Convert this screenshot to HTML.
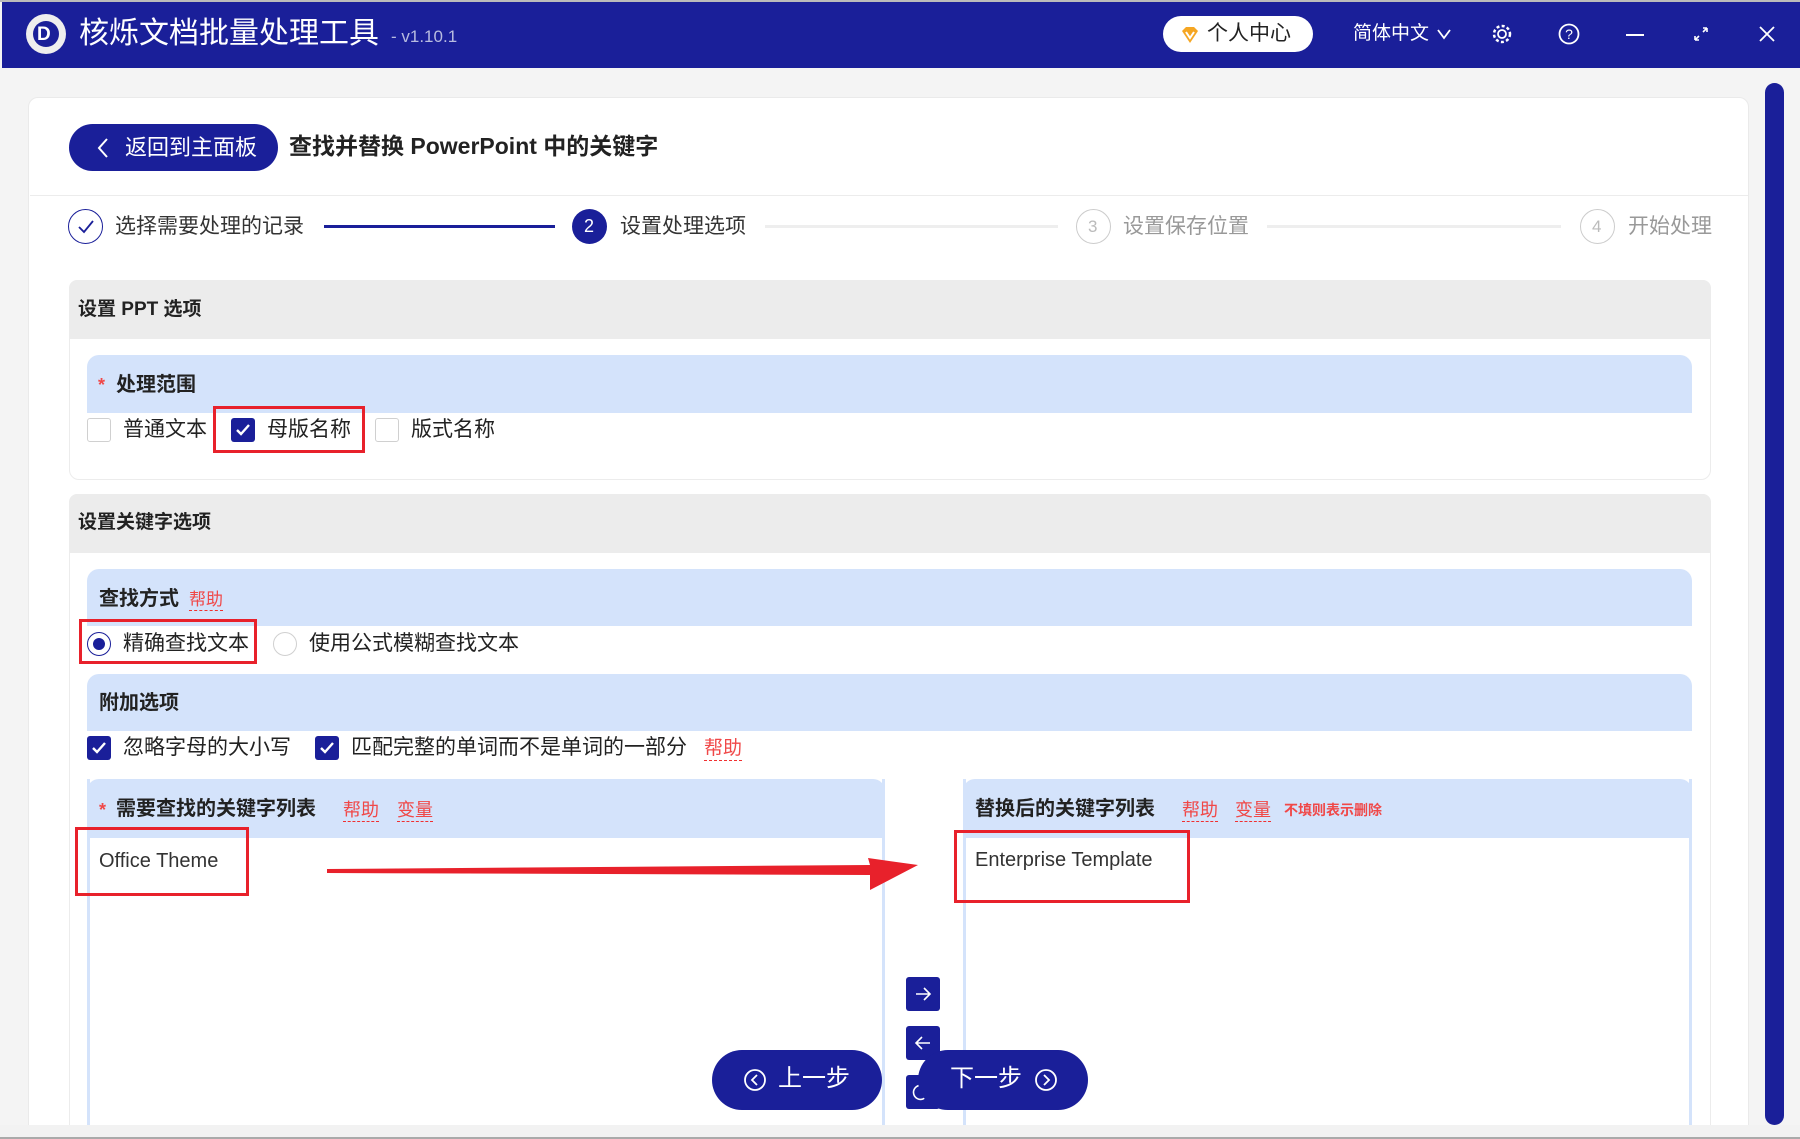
<!DOCTYPE html>
<html><head><meta charset="utf-8">
<style>
*{margin:0;padding:0;box-sizing:border-box}
html{width:1800px;height:1139px;overflow:hidden}
body{width:1800px;height:1139px;overflow:hidden;background:#f4f4f4;font-family:"Liberation Sans","Noto Sans CJK SC",sans-serif;position:relative;color:#222}
.a{position:absolute}
.t{position:absolute;white-space:nowrap;line-height:1}
.blue{background:#1a1f99}
.hdr{position:absolute;background:#d4e3fb;border-radius:12px 12px 0 0}
.gh{position:absolute;background:#ececec;border-radius:8px 8px 0 0}
.b{font-weight:bold}
.red{color:#f04848}
.u{border-bottom:1.5px dashed #f03030;padding-bottom:2px}
.cb{position:absolute;width:24px;height:24px;border:1px solid #d0d0d0;border-radius:3px;background:#fff}
.cbc{position:absolute;width:24px;height:24px;border-radius:3px;background:#1a1f99}
.rb{position:absolute;border:3px solid #e8212b}
.sq{position:absolute;width:34px;height:34px;border-radius:3px;background:#1a1f99}
</style></head><body>
<div class="a" style="left:0;top:0;width:1800px;height:2px;background:#bbb"></div>
<div class="a blue" style="left:2px;top:2px;width:1798px;height:66px"></div>
<div class="a" style="left:26px;top:14px;width:40px;height:40px;border-radius:50%;background:#eee"></div>
<div class="a" style="left:33px;top:21px;width:26px;height:26px;border-radius:50%;background:#1a1f99"></div>
<div class="t b" style="left:37px;top:25px;color:#fff;font-size:19px">D</div>
<div class="t" style="left:79px;top:19px;color:#fff;font-size:30px">核烁文档批量处理工具</div>
<div class="t" style="left:391px;top:28px;color:#b8bce0;font-size:17px">- v1.10.1</div>
<div class="a" style="left:1163px;top:16px;width:150px;height:36px;border-radius:18px;background:#fff"></div>
<svg class="a" style="left:1180px;top:25px" width="20" height="20" viewBox="0 0 20 20"><path d="M2 6 L6 2 L14 2 L18 6 L10 18 Z" fill="#f5a623"/><path d="M6 7 L10 13 L14 7" stroke="#fff" stroke-width="2" fill="none"/></svg>
<div class="t" style="left:1207px;top:23px;font-size:21px;color:#222">个人中心</div>
<div class="t" style="left:1353px;top:24px;font-size:19px;color:#fff">简体中文</div>
<svg class="a" style="left:1436px;top:28px" width="16" height="12"><path d="M2 2 L8 10 L14 2" stroke="#fff" stroke-width="1.8" fill="none"/></svg>
<svg class="a" style="left:1491px;top:23px" width="22" height="22" viewBox="0 0 22 22"><circle cx="11" cy="11" r="4" stroke="#fff" stroke-width="1.8" fill="none"/><circle cx="11" cy="11" r="8" stroke="#fff" stroke-width="2.5" stroke-dasharray="3 2.3" fill="none"/></svg>
<svg class="a" style="left:1558px;top:23px" width="22" height="22"><circle cx="11" cy="11" r="9.5" stroke="#fff" stroke-width="1.8" fill="none"/><text x="11" y="16" text-anchor="middle" fill="#fff" font-size="14" font-family="Liberation Sans">?</text></svg>
<div class="a" style="left:1626px;top:34px;width:18px;height:2px;background:#fff"></div>
<svg class="a" style="left:1692px;top:25px" width="18" height="18"><path d="M3 15 L7 11 M15 3 L11 7 M3 15 L3 11 M3 15 L7 15 M15 3 L11 3 M15 3 L15 7" stroke="#fff" stroke-width="1.6" fill="none"/></svg>
<svg class="a" style="left:1758px;top:25px" width="18" height="18"><path d="M2 2 L16 16 M16 2 L2 16" stroke="#fff" stroke-width="1.8"/></svg>

<div class="a" style="left:28px;top:97px;width:1721px;height:1040px;background:#fff;border:1px solid #eaeaea;border-radius:10px"></div>
<div class="a" style="left:1765px;top:83px;width:19px;height:1042px;border-radius:10px;background:#1a1f99"></div>

<div class="a blue" style="left:69px;top:124px;width:209px;height:47px;border-radius:24px"></div>
<svg class="a" style="left:96px;top:137px" width="14" height="22"><path d="M11 2 L3 11 L11 20" stroke="#fff" stroke-width="2" fill="none"/></svg>
<div class="t" style="left:125px;top:137px;color:#fff;font-size:22px">返回到主面板</div>
<div class="t b" style="left:289px;top:135px;font-size:23px;color:#222">查找并替换 PowerPoint 中的关键字</div>
<div class="a" style="left:30px;top:195px;width:1718px;height:1px;background:#ececec"></div>

<div class="a" style="left:68px;top:209px;width:35px;height:35px;border-radius:50%;border:1.5px solid #1a1f99"></div>
<svg class="a" style="left:76px;top:218px" width="20" height="18"><path d="M3 9 L8 14 L17 3" stroke="#1a1f99" stroke-width="1.8" fill="none"/></svg>
<div class="t" style="left:115px;top:216px;font-size:21px;color:#333">选择需要处理的记录</div>
<div class="a" style="left:324px;top:225px;width:231px;height:3px;background:#1a1f99"></div>
<div class="a blue" style="left:572px;top:209px;width:35px;height:35px;border-radius:50%"></div>
<div class="t" style="left:584px;top:217px;color:#fff;font-size:18px">2</div>
<div class="t" style="left:620px;top:216px;font-size:21px;color:#333">设置处理选项</div>
<div class="a" style="left:765px;top:225px;width:293px;height:3px;background:#eee"></div>
<div class="a" style="left:1076px;top:209px;width:35px;height:35px;border-radius:50%;border:1.5px solid #ccc"></div>
<div class="t" style="left:1088px;top:218px;color:#bbb;font-size:17px">3</div>
<div class="t" style="left:1123px;top:216px;font-size:21px;color:#999">设置保存位置</div>
<div class="a" style="left:1267px;top:225px;width:294px;height:3px;background:#eee"></div>
<div class="a" style="left:1580px;top:209px;width:35px;height:35px;border-radius:50%;border:1.5px solid #ccc"></div>
<div class="t" style="left:1592px;top:218px;color:#bbb;font-size:17px">4</div>
<div class="t" style="left:1628px;top:216px;font-size:21px;color:#999">开始处理</div>

<div class="a" style="left:69px;top:280px;width:1642px;height:200px;border:1px solid #ececec;border-radius:10px"></div>
<div class="gh" style="left:69px;top:280px;width:1642px;height:59px"></div>
<div class="t b" style="left:78px;top:300px;font-size:19px">设置 PPT 选项</div>
<div class="hdr" style="left:87px;top:355px;width:1605px;height:58px"></div>
<div class="t b red" style="left:98px;top:376px;font-size:18px">*</div>
<div class="t b" style="left:116px;top:375px;font-size:20px">处理范围</div>
<div class="cb" style="left:87px;top:418px"></div>
<div class="t" style="left:123px;top:419px;font-size:21px">普通文本</div>
<div class="cbc" style="left:231px;top:418px"></div>
<svg class="a" style="left:235px;top:422px" width="16" height="16"><path d="M2 8 L6 12 L14 3" stroke="#fff" stroke-width="2.4" fill="none"/></svg>
<div class="t" style="left:267px;top:419px;font-size:21px">母版名称</div>
<div class="rb" style="left:213px;top:406px;width:152px;height:47px"></div>
<div class="cb" style="left:375px;top:418px"></div>
<div class="t" style="left:411px;top:419px;font-size:21px">版式名称</div>

<div class="a" style="left:69px;top:494px;width:1642px;height:660px;border:1px solid #ececec;border-radius:10px"></div>
<div class="gh" style="left:69px;top:494px;width:1642px;height:59px"></div>
<div class="t b" style="left:78px;top:513px;font-size:19px">设置关键字选项</div>
<div class="hdr" style="left:87px;top:569px;width:1605px;height:57px"></div>
<div class="t b" style="left:99px;top:589px;font-size:20px">查找方式</div>
<div class="t red u" style="left:189px;top:591px;font-size:17px">帮助</div>
<div class="a" style="left:87px;top:632px;width:24px;height:24px;border-radius:50%;border:1.5px solid #1a1f99"></div>
<div class="a blue" style="left:93px;top:638px;width:12px;height:12px;border-radius:50%"></div>
<div class="t" style="left:123px;top:633px;font-size:21px">精确查找文本</div>
<div class="rb" style="left:79px;top:619px;width:178px;height:45px"></div>
<div class="a" style="left:273px;top:632px;width:24px;height:24px;border-radius:50%;border:1px solid #d0d0d0"></div>
<div class="t" style="left:309px;top:633px;font-size:21px">使用公式模糊查找文本</div>

<div class="hdr" style="left:87px;top:674px;width:1605px;height:57px"></div>
<div class="t b" style="left:99px;top:693px;font-size:20px">附加选项</div>
<div class="cbc" style="left:87px;top:736px"></div>
<svg class="a" style="left:91px;top:740px" width="16" height="16"><path d="M2 8 L6 12 L14 3" stroke="#fff" stroke-width="2.4" fill="none"/></svg>
<div class="t" style="left:123px;top:737px;font-size:21px">忽略字母的大小写</div>
<div class="cbc" style="left:315px;top:736px"></div>
<svg class="a" style="left:319px;top:740px" width="16" height="16"><path d="M2 8 L6 12 L14 3" stroke="#fff" stroke-width="2.4" fill="none"/></svg>
<div class="t" style="left:351px;top:737px;font-size:21px">匹配完整的单词而不是单词的一部分</div>
<div class="t red u" style="left:704px;top:739px;font-size:19px">帮助</div>

<div class="a" style="left:87px;top:779px;width:798px;height:360px;border-left:3px solid #d4e3fb;border-right:3px solid #d4e3fb"></div>
<div class="hdr" style="left:87px;top:779px;width:798px;height:59px"></div>
<div class="t b red" style="left:99px;top:801px;font-size:18px">*</div>
<div class="t b" style="left:116px;top:799px;font-size:20px">需要查找的关键字列表</div>
<div class="t red u" style="left:343px;top:801px;font-size:18px">帮助</div>
<div class="t red u" style="left:397px;top:801px;font-size:18px">变量</div>
<div class="t" style="left:99px;top:851px;font-size:20px;color:#333">Office Theme</div>
<div class="rb" style="left:75px;top:827px;width:174px;height:69px"></div>

<div class="a" style="left:963px;top:779px;width:729px;height:360px;border-left:3px solid #d4e3fb;border-right:3px solid #d4e3fb"></div>
<div class="hdr" style="left:963px;top:779px;width:729px;height:59px"></div>
<div class="t b" style="left:975px;top:799px;font-size:20px">替换后的关键字列表</div>
<div class="t red u" style="left:1182px;top:801px;font-size:18px">帮助</div>
<div class="t red u" style="left:1235px;top:801px;font-size:18px">变量</div>
<div class="t b red" style="left:1284px;top:803px;font-size:14px">不填则表示删除</div>
<div class="t" style="left:975px;top:850px;font-size:20px;color:#333">Enterprise Template</div>
<div class="rb" style="left:954px;top:830px;width:236px;height:73px"></div>

<svg class="a" style="left:320px;top:838px" width="600" height="60"><path d="M7 31 L550 27 L548 20 L598 27 L550 52 L550 37 L7 35 Z" fill="#e8212b"/></svg>

<div class="sq" style="left:906px;top:977px"></div>
<svg class="a" style="left:913px;top:984px" width="20" height="20"><path d="M3 10 L17 10 M11 4 L17 10 L11 16" stroke="#fff" stroke-width="1.6" fill="none"/></svg>
<div class="sq" style="left:906px;top:1026px"></div>
<svg class="a" style="left:913px;top:1033px" width="20" height="20"><path d="M17 10 L3 10 M9 4 L3 10 L9 16" stroke="#fff" stroke-width="1.6" fill="none"/></svg>
<div class="sq" style="left:906px;top:1075px"></div>
<svg class="a" style="left:911px;top:1083px" width="20" height="20"><path d="M14 4 A7 7 0 1 0 16 12" stroke="#fff" stroke-width="1.6" fill="none"/></svg>

<div class="a blue" style="left:712px;top:1050px;width:170px;height:60px;border-radius:30px"></div>
<svg class="a" style="left:743px;top:1068px" width="24" height="24"><circle cx="12" cy="12" r="10" stroke="#fff" stroke-width="1.8" fill="none"/><path d="M14 7 L9 12 L14 17" stroke="#fff" stroke-width="1.8" fill="none"/></svg>
<div class="t" style="left:778px;top:1067px;color:#fff;font-size:24px">上一步</div>
<div class="a blue" style="left:918px;top:1050px;width:170px;height:60px;border-radius:30px"></div>
<div class="t" style="left:950px;top:1067px;color:#fff;font-size:24px">下一步</div>
<svg class="a" style="left:1034px;top:1068px" width="24" height="24"><circle cx="12" cy="12" r="10" stroke="#fff" stroke-width="1.8" fill="none"/><path d="M10 7 L15 12 L10 17" stroke="#fff" stroke-width="1.8" fill="none"/></svg>

<div class="a" style="left:0;top:1125px;width:1800px;height:14px;background:#f2f2f2;border-bottom:2px solid #aaa;z-index:10"></div>
</body></html>
